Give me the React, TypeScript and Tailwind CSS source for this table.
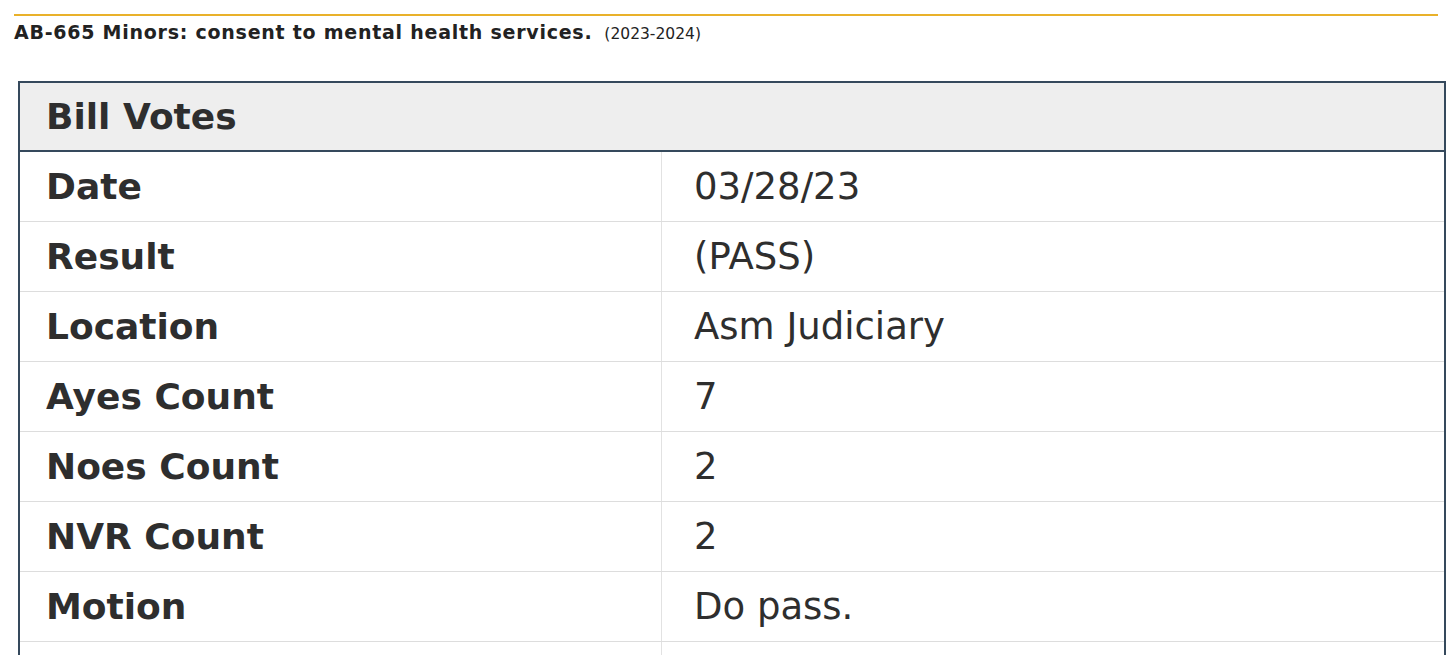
const rows: { label: string; value: string }[] = [
  { label: "Date", value: "03/28/23" },
  { label: "Result", value: "(PASS)" },
  { label: "Location", value: "Asm Judiciary" },
  { label: "Ayes Count", value: "7" },
  { label: "Noes Count", value: "2" },
  { label: "NVR Count", value: "2" },
  { label: "Motion", value: "Do pass." },
  { label: "", value: "" },
];

export default function App() {
  return (
    <div className="min-h-screen bg-white font-['DejaVu_Sans',Verdana,sans-serif] text-[#2e2e2e]">
      <div className="px-[14px] pt-[14px]">
        <div className="h-[2px] w-[1424px] bg-[#e9b12a]" />
        <div className="mt-[5px] flex items-baseline">
          <h1 className="text-[19px] font-bold leading-[22px] tracking-[0.75px] text-[#222]">
            AB-665 Minors: consent to mental health services.
          </h1>
          <span className="ml-[12px] text-[15.5px] text-[#222]">(2023-2024)</span>
        </div>
      </div>

      <div className="ml-[18px] mt-[35px] w-[1428px] border-x-2 border-t-2 border-[#35495c]">
        <div className="flex h-[69px] items-center border-b-2 border-[#35495c] bg-[#eeeeee] pl-[26px]">
          <h2 className="text-[36px] font-bold leading-none">Bill Votes</h2>
        </div>
        {rows.map((row, i) => (
          <div key={i} className="flex h-[70px] border-b border-[#dddddd]">
            <div className="flex w-[642px] shrink-0 items-center border-r border-[#e2e2e2] pl-[26px] text-[36px] font-bold leading-none">
              {row.label}
            </div>
            <div className="flex flex-1 items-center pl-[32px] text-[37px] leading-none">
              {row.value}
            </div>
          </div>
        ))}
      </div>
    </div>
  );
}
